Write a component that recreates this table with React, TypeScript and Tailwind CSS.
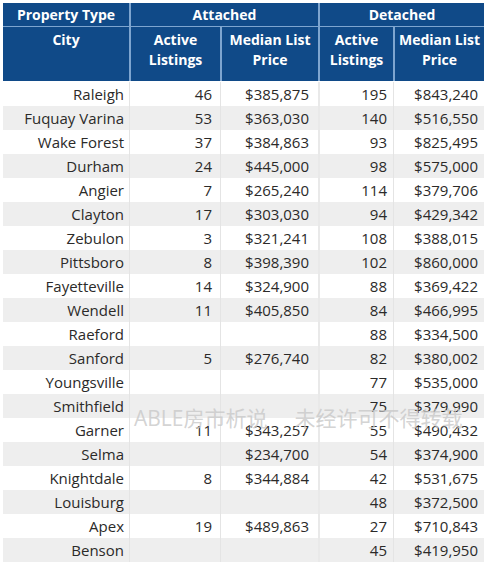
const rows: [string, string, string, string, string][] = [
  ["Raleigh", "46", "$385,875", "195", "$843,240"],
  ["Fuquay Varina", "53", "$363,030", "140", "$516,550"],
  ["Wake Forest", "37", "$384,863", "93", "$825,495"],
  ["Durham", "24", "$445,000", "98", "$575,000"],
  ["Angier", "7", "$265,240", "114", "$379,706"],
  ["Clayton", "17", "$303,030", "94", "$429,342"],
  ["Zebulon", "3", "$321,241", "108", "$388,015"],
  ["Pittsboro", "8", "$398,390", "102", "$860,000"],
  ["Fayetteville", "14", "$324,900", "88", "$369,422"],
  ["Wendell", "11", "$405,850", "84", "$466,995"],
  ["Raeford", "", "", "88", "$334,500"],
  ["Sanford", "5", "$276,740", "82", "$380,002"],
  ["Youngsville", "", "", "77", "$535,000"],
  ["Smithfield", "", "", "75", "$379,990"],
  ["Garner", "11", "$343,257", "55", "$490,432"],
  ["Selma", "", "$234,700", "54", "$374,900"],
  ["Knightdale", "8", "$344,884", "42", "$531,675"],
  ["Louisburg", "", "", "48", "$372,500"],
  ["Apex", "19", "$489,863", "27", "$710,843"],
  ["Benson", "", "", "45", "$419,950"],
];

const cols = "grid grid-cols-[126px_91px_98px_75px_91px]";

const App = () => {
  return (
    <div
      className="relative w-[488px] h-[563px] bg-white pt-[3px] pl-[3px] text-[#2b2a29]"
      style={{ fontFamily: '"Open Sans", "Noto Sans", "Noto Sans CJK SC", sans-serif' }}
    >
      <div className="w-[481px]">
        {/* header */}
        <div className={`${cols} bg-[#104a88] text-white font-bold text-[14px] leading-[20px]`}>
          <div className="h-[24px] flex items-center justify-center border-b border-[#7ea5cf]">Property Type</div>
          <div className="col-span-2 h-[24px] flex items-center justify-center border-b border-l-2 border-[#7ea5cf]">
            Attached
          </div>
          <div className="col-span-2 h-[24px] flex items-center justify-center border-b border-l-2 border-[#7ea5cf]">
            Detached
          </div>
          <div className="h-[54px] text-center pt-[3px]">City</div>
          <div className="h-[54px] text-center pt-[3px] border-l-2 border-[#7ea5cf]">
            Active
            <br />
            Listings
          </div>
          <div className="h-[54px] text-center pt-[3px] border-l-2 border-[#7ea5cf]">
            Median List
            <br />
            Price
          </div>
          <div className="h-[54px] text-center pt-[3px] border-l-2 border-[#7ea5cf]">
            Active
            <br />
            Listings
          </div>
          <div className="h-[54px] text-center pt-[3px] border-l-2 border-[#7ea5cf]">
            Median List
            <br />
            Price
          </div>
        </div>

        {/* body */}
        <div className="pt-[1px] text-[15px]">
          {rows.map((r, i) => (
            <div
              key={r[0]}
              className={`${cols} h-[24px] leading-[24px] ${i % 2 === 1 ? "bg-[#eeeeee]" : "bg-white"}`}
            >
              <div className="text-right pr-[5px]">{r[0]}</div>
              <div className="text-right pr-[8px] border-l border-[#e4e4e4]">{r[1]}</div>
              <div className="text-right pr-[9px] border-l border-[#e4e4e4]">{r[2]}</div>
              <div className="text-right pr-[6px] border-l-2 border-[#e9e9e9]">{r[3]}</div>
              <div className="text-right pr-[6px] border-l border-[#e4e4e4]">{r[4]}</div>
            </div>
          ))}
        </div>
      </div>

      {/* watermark */}
      <div className="absolute left-[134px] top-[404px] text-[21px] leading-[28px] text-[#c8c8c8]/80 whitespace-nowrap pointer-events-none">
        ABLE房市析说<span className="ml-[27px]">未经许可不得转载</span>
      </div>
    </div>
  );
};

export default App;
